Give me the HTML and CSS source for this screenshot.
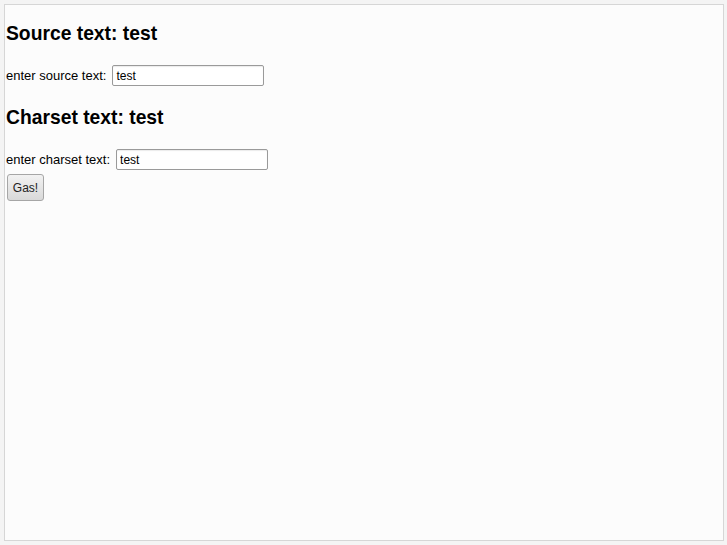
FILE: index.html
```html
<!DOCTYPE html>
<html lang="en">
<head>
    <meta charset="UTF-8">
    <title>Charset test</title>
    <link rel="stylesheet" href="styles.css">
</head>
<body>
    <div class="frame">
        <h3>Source text: test</h3>
        <div class="row">
            <label for="source">enter source text:</label>
            <input type="text" id="source" value="test">
        </div>
        <h3>Charset text: test</h3>
        <div class="row">
            <label for="charset">enter charset text:</label>
            <input type="text" id="charset" value="test">
        </div>
        <button>Gas!</button>
    </div>
</body>
</html>
```

FILE: styles.css
```css
html, body { margin: 0; padding: 0; background: #f4f4f4; }
body { padding: 4px; height: 545px; box-sizing: border-box; font-family: "Liberation Sans", Arial, sans-serif; color: #000; }
.frame { height: 537px; width: 720px; box-sizing: border-box; border: 1px solid #d6d6d6; background: #fcfcfc; padding: 0 1px; }
h3 { font-size: 19.3px; line-height: 22px; font-weight: bold; margin: 21px 0 20px; }
h3:first-child { margin-top: 18px; }
.row { display: flex; align-items: center; gap: 6px; font-size: 13px; margin-bottom: 4px; }
.row input { width: 152px; height: 21px; box-sizing: border-box; border: 1px solid #9a9a9a; border-radius: 2px; padding: 0 3px; font: 12px "Liberation Sans", Arial, sans-serif; background: #fff; box-shadow: inset 0 1px 1px rgba(0,0,0,0.08); }
button { margin-left: 1px; width: 37px; height: 27px; border: 1px solid #a6a6a6; border-radius: 3px; background: linear-gradient(#f2f2f2, #d9d9d9); font: 12px "Liberation Sans", Arial, sans-serif; color: #222; padding: 0; }
```
